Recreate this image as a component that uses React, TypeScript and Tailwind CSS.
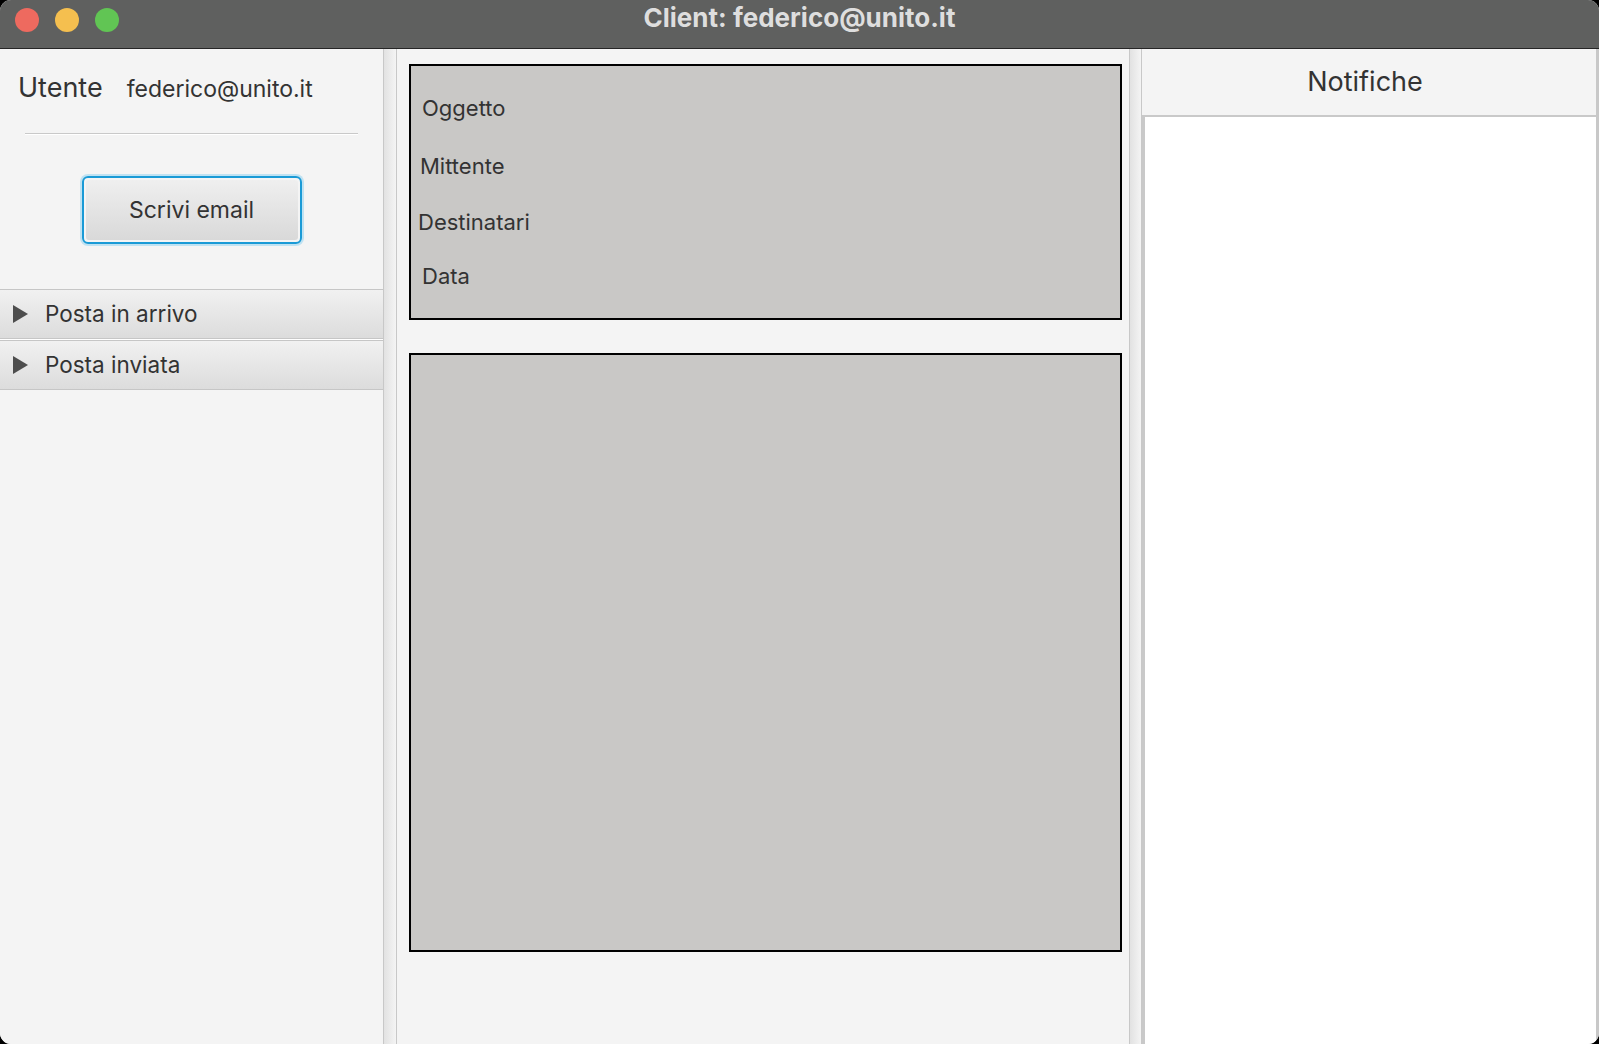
import React from 'react';

const font = { fontFamily: 'Inter, "Noto Sans", sans-serif' };

const TreeRow: React.FC<{ label: string }> = ({ label }) => (
  <div className="flex items-center h-[50px] border-y border-[#c6c6c6] bg-gradient-to-b from-[#f1f1f1] to-[#dcdcdc] pl-[13px]">
    <svg width="15" height="18" viewBox="0 0 15 18" className="shrink-0">
      <path d="M0 0 L15 9 L0 18 Z" fill="#4d4d4d" />
    </svg>
    <span className="ml-[17px] text-[22.5px] text-[#333]">{label}</span>
  </div>
);

export default function App() {
  return (
    <div className="w-[1599px] h-[1044px] bg-black" style={font}>
      <div className="flex flex-col h-full rounded-[11px] overflow-hidden bg-[#f4f4f4]">
        {/* title bar */}
        <div className="grid grid-cols-[1fr_auto_1fr] items-start h-[49px] shrink-0 bg-[#5f605f] border-b border-[#262626]">
          <div className="flex items-center gap-[16px] pl-[15px] pt-[8px]">
            <span className="w-[24px] h-[24px] rounded-full bg-[#ee6a5f]" />
            <span className="w-[24px] h-[24px] rounded-full bg-[#f5bf4f]" />
            <span className="w-[24px] h-[24px] rounded-full bg-[#61c554]" />
          </div>
          <div className="text-[26px] leading-[32px] font-bold text-[#dedede] pt-[2px]">Client: federico@unito.it</div>
          <div />
        </div>

        <div className="flex flex-1 min-h-0">
          {/* left panel */}
          <div className="w-[383px] shrink-0 flex flex-col bg-[#f4f4f4]">
            <div className="flex items-baseline pl-[18px] pt-[22px] h-[84px]">
              <span className="text-[27px] text-[#333] leading-[34px]">Utente</span>
              <span className="ml-[24px] text-[23px] text-[#333]">federico@unito.it</span>
            </div>
            <div className="mx-[25px] h-[2px] bg-[#c9c9c9] border-b border-white" />
            <div className="flex justify-center pt-[41px] pb-[45px]">
              <button className="w-[220px] h-[68px] rounded-[6px] border-2 border-[#1a9ad6] ring-2 ring-[#bfe2f2] p-[2px]">
                <span className="flex items-center justify-center w-full h-full rounded-[3px] bg-gradient-to-b from-[#efefef] to-[#d9d9d9] text-[23px] text-[#333]">
                  Scrivi email
                </span>
              </button>
            </div>
            <TreeRow label="Posta in arrivo" />
            <div className="h-[1px] bg-white" />
            <TreeRow label="Posta inviata" />
          </div>

          {/* splitter */}
          <div className="w-[14px] shrink-0 border-x border-[#c8c8c8] bg-gradient-to-r from-[#e2e2e2] to-[#f4f4f4]" />

          {/* middle panel */}
          <div className="flex-1 flex flex-col pt-[15px] pl-[12px] pr-[7px]">
            <div className="h-[256px] border-2 border-black bg-[#c9c8c6] flex flex-col text-[22px] text-[#333]">
              <span className="pl-[11px] mt-[26px]">Oggetto</span>
              <span className="pl-[9px] mt-[25px]">Mittente</span>
              <span className="pl-[7px] mt-[23px]">Destinatari</span>
              <span className="pl-[11px] mt-[21px]">Data</span>
            </div>
            <div className="h-[599px] mt-[33px] border-2 border-black bg-[#c9c8c6]" />
          </div>

          {/* splitter */}
          <div className="w-[13px] shrink-0 border-x border-[#c8c8c8] bg-gradient-to-r from-[#e2e2e2] to-[#f4f4f4]" />

          {/* right panel */}
          <div className="w-[457px] shrink-0 flex flex-col border-r-[3px] border-[#c8c8c8]">
            <div className="h-[66px] shrink-0 flex items-center justify-center pr-[8px] text-[27px] text-[#333]">Notifiche</div>
            <div className="flex-1 bg-white border-t-2 border-l-[3px] border-[#c9c9c9]" />
          </div>
        </div>
      </div>
    </div>
  );
}
